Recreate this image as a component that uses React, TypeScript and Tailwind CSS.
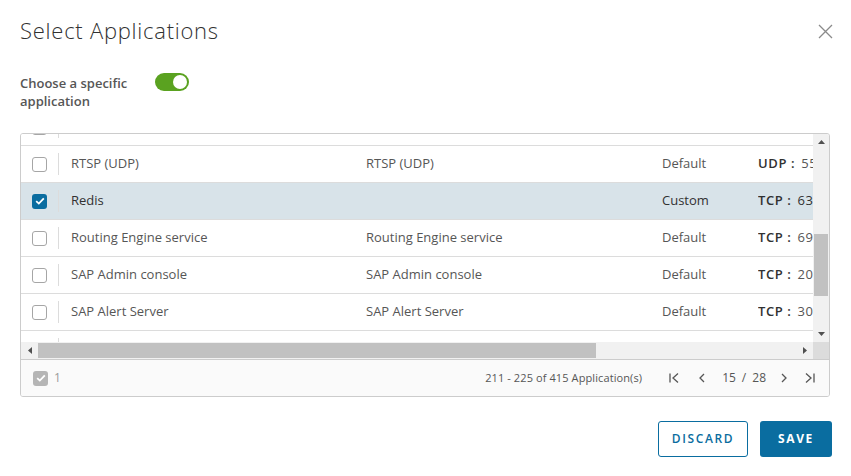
import React from "react";

type Row = { name: string; desc: string; kind: string; proto: string; port: string; checked?: boolean };

const rows: Row[] = [
  { name: "", desc: "", kind: "", proto: "", port: "" },
  { name: "RTSP (UDP)", desc: "RTSP (UDP)", kind: "Default", proto: "UDP", port: "554" },
  { name: "Redis", desc: "", kind: "Custom", proto: "TCP", port: "6379", checked: true },
  { name: "Routing Engine service", desc: "Routing Engine service", kind: "Default", proto: "TCP", port: "6901" },
  { name: "SAP Admin console", desc: "SAP Admin console", kind: "Default", proto: "TCP", port: "2000" },
  { name: "SAP Alert Server", desc: "SAP Alert Server", kind: "Default", proto: "TCP", port: "3000" },
  { name: "", desc: "", kind: "", proto: "", port: "" },
];

function Check({ on, muted }: { on?: boolean; muted?: boolean }) {
  if (on) {
    return (
      <span
        className={`flex h-[15px] w-[15px] items-center justify-center rounded-[3px] ${
          muted ? "bg-[#b5b5b5]" : "bg-[#0a6da0]"
        }`}
      >
        <svg width="10" height="8" viewBox="0 0 10 8">
          <path d="M1.2 4.2 L3.8 6.6 L8.8 1.4" fill="none" stroke="white" strokeWidth="1.8" />
        </svg>
      </span>
    );
  }
  return <span className="block h-[15px] w-[15px] rounded-[3px] border border-[#a6a6a6] bg-white" />;
}

function Tri({ dir }: { dir: "up" | "down" | "left" | "right" }) {
  const d = {
    up: "M0 4 L3.5 0 L7 4 Z",
    down: "M0 0 L7 0 L3.5 4 Z",
    left: "M4 0 L4 7 L0 3.5 Z",
    right: "M0 0 L4 3.5 L0 7 Z",
  }[dir];
  const w = dir === "up" || dir === "down" ? 7 : 4;
  const h = dir === "up" || dir === "down" ? 4 : 7;
  return (
    <svg width={w} height={h} viewBox={`0 0 ${w} ${h}`}>
      <path d={d} fill="#505050" />
    </svg>
  );
}

function PageIcon({ d }: { d: string }) {
  return (
    <svg width="12" height="12" viewBox="0 0 12 12" fill="none" stroke="#565656" strokeWidth="1.3">
      <path d={d} />
    </svg>
  );
}

export default function App() {
  return (
    <div
      className="relative h-[476px] w-[851px] overflow-hidden bg-white text-[#565656]"
      style={{ fontFamily: "'Open Sans', 'Liberation Sans', sans-serif" }}
    >
      {/* header */}
      <div className="flex items-start justify-between pl-[20px] pr-[18px] pt-[14px]">
        <h1 className="text-[22px] font-light leading-[32px] tracking-[0.75px] text-[#313131]">Select Applications</h1>
        <button className="mt-[10px] text-[#8a8a8a]">
          <svg width="15" height="15" viewBox="0 0 15 15" fill="none" stroke="currentColor" strokeWidth="1.3">
            <path d="M1 1 L14 14 M14 1 L1 14" />
          </svg>
        </button>
      </div>

      {/* toggle */}
      <div className="mt-[28px] flex items-start pl-[20px]">
        <div className="w-[135px] text-[13px] font-semibold leading-[18px] text-[#565656]">
          Choose a specific
          <br />
          application
        </div>
        <div className="-mt-[1px] flex h-[18px] w-[34px] items-center justify-end rounded-full bg-[#5aa220] pr-[2px]">
          <span className="block h-[14px] w-[14px] rounded-full bg-white" />
        </div>
      </div>

      {/* datagrid */}
      <div className="mx-[20px] mt-[23px] w-[810px] overflow-hidden rounded-[3px] border border-[#cccccc]">
        <div className="flex h-[208px]">
          <div className="flex-1 overflow-hidden">
            <div className="-mt-[25px]">
              {rows.map((r, i) => (
                <div
                  key={i}
                  className={`flex h-[37px] items-center border-b border-[#dcdcdc] text-[13px] ${
                    r.checked ? "bg-[#d8e3e9] text-[#313131]" : "bg-white"
                  }`}
                >
                  <div className="flex w-[37px] shrink-0 justify-center">
                    <Check on={r.checked} />
                  </div>
                  <div className="h-[22px] w-px shrink-0 bg-[#dcdcdc]" />
                  <div className="w-[307px] shrink-0 pl-[12px]">{r.name}</div>
                  <div className="w-[296px] shrink-0">{r.desc}</div>
                  <div className="w-[96px] shrink-0">{r.kind}</div>
                  <div className="min-w-0 flex-1 overflow-hidden whitespace-nowrap tracking-[0.6px]">
                    {r.proto && (
                      <>
                        <span className="font-semibold text-[#313131]">{r.proto} :</span>
                        <span className="ml-[6px]">{r.port}</span>
                      </>
                    )}
                  </div>
                </div>
              ))}
            </div>
          </div>
          {/* vertical scrollbar */}
          <div className="flex w-[16px] shrink-0 flex-col items-center bg-[#f1f1f1]">
            <div className="flex h-[16px] items-center">
              <Tri dir="up" />
            </div>
            <div className="flex-1 px-[1px] pt-[84px]">
              <div className="h-[62px] w-[14px] bg-[#c1c1c1]" />
            </div>
            <div className="flex h-[16px] items-center">
              <Tri dir="down" />
            </div>
          </div>
        </div>

        {/* horizontal scrollbar */}
        <div className="flex h-[17px] items-center bg-[#f1f1f1]">
          <div className="flex w-[17px] justify-center">
            <Tri dir="left" />
          </div>
          <div className="flex-1">
            <div className="h-[15px] w-[558px] bg-[#c1c1c1]" />
          </div>
          <div className="flex w-[16px] justify-center">
            <Tri dir="right" />
          </div>
          <div className="h-[17px] w-[16px] bg-[#dcdcdc]" />
        </div>

        {/* footer */}
        <div className="flex h-[37px] items-center border-t border-[#cccccc] bg-[#fafafa] pl-[12px] pr-[13px]">
          <Check on muted />
          <span className="ml-[6px] text-[12px] text-[#9a9a9a]">1</span>
          <span className="ml-auto text-[11px] tracking-[0.1px] text-[#565656]">211 - 225 of 415 Application(s)</span>
          <div className="ml-[26px] flex items-center text-[12px]">
            <PageIcon d="M2 1.5 L2 10.5 M10 1.5 L5 6 L10 10.5" />
            <span className="ml-[16px]">
              <PageIcon d="M8 2 L4 6 L8 10" />
            </span>
            <span className="ml-[14px]">15</span>
            <span className="mx-[6px]">/</span>
            <span>28</span>
            <span className="ml-[12px]">
              <PageIcon d="M4 2 L8 6 L4 10" />
            </span>
            <span className="ml-[14px]">
              <PageIcon d="M2 1.5 L7 6 L2 10.5 M10 1.5 L10 10.5" />
            </span>
          </div>
        </div>
      </div>

      {/* buttons */}
      <div className="mt-[24px] flex justify-end gap-[12px] pr-[19px]">
        <button className="h-[36px] w-[90px] rounded-[3px] border border-[#0a6da0] bg-white text-[12px] font-semibold tracking-[1.6px] text-[#0a6da0]">
          DISCARD
        </button>
        <button className="h-[36px] w-[72px] rounded-[3px] bg-[#0a6da0] text-[12px] font-bold tracking-[1.6px] text-white">
          SAVE
        </button>
      </div>
    </div>
  );
}
